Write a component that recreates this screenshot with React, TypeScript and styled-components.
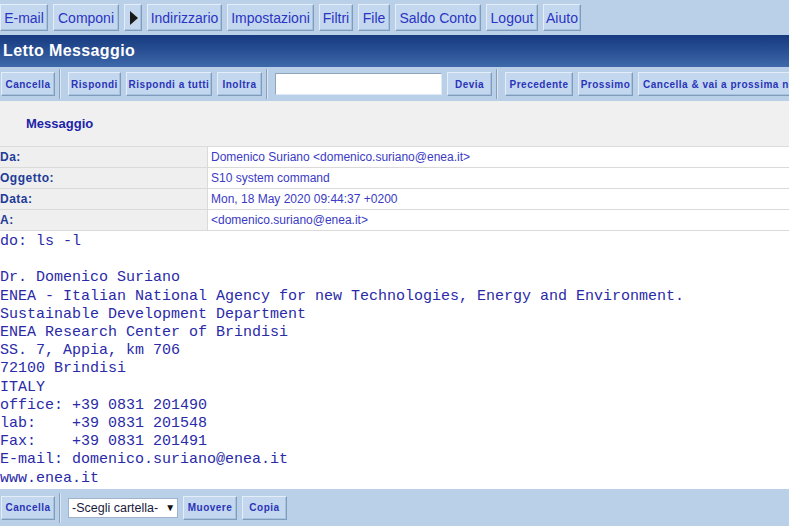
import { FunctionComponent, Fragment } from "react";
import styled, { createGlobalStyle } from "styled-components";

const GlobalStyle = createGlobalStyle`
  html, body {
    margin: 0;
    padding: 0;
    background: #ffffff;
    font-family: "Liberation Sans", Arial, sans-serif;
  }
`;

const Page = styled.div`
  width: 789px;
  height: 526px;
  overflow: hidden;
  display: flex;
  flex-direction: column;
`;

const NavBar = styled.div`
  height: 35px;
  box-sizing: border-box;
  padding: 4px 0 0 0;
  background: #b9d0e8;
  display: flex;
  align-items: flex-start;
  gap: 5px;
`;

const NavButton = styled.div<{ $w: number }>`
  width: ${(p) => p.$w}px;
  height: 27px;
  box-sizing: border-box;
  background: #c3d8ee;
  border: 1px solid;
  border-color: #e4eefa #7f9cbd #7f9cbd #e4eefa;
  box-shadow: inset -1px -1px 0 #a8c1dc;
  display: flex;
  align-items: center;
  justify-content: center;
  font-size: 14px;
  color: #2b34c4;
  white-space: nowrap;
  flex-shrink: 0;
`;

const Arrow = styled.span`
  width: 0;
  height: 0;
  border-top: 7px solid transparent;
  border-bottom: 7px solid transparent;
  border-left: 8px solid #1a1a1a;
  margin-left: 2px;
`;

const TitleBar = styled.div`
  height: 32px;
  background: linear-gradient(#163a7f, #2b5296 55%, #3e6aaa);
  color: #ffffff;
  font-weight: bold;
  font-size: 16px;
  letter-spacing: 0.4px;
  display: flex;
  align-items: center;
  padding-left: 3px;
`;

const ToolBar = styled.div<{ $h: number }>`
  height: ${(p) => p.$h}px;
  flex-shrink: 0;
  box-sizing: border-box;
  background: #b9d0e8;
  display: flex;
  align-items: center;
  gap: 5px;
  padding-left: 1px;
  overflow: hidden;
  white-space: nowrap;
`;

const ActionButton = styled.div<{ $w: number }>`
  width: ${(p) => p.$w}px;
  height: 24px;
  box-sizing: border-box;
  flex-shrink: 0;
  background: #c3d8ee;
  border: 1px solid;
  border-color: #e4eefa #7f9cbd #7f9cbd #e4eefa;
  box-shadow: inset -1px -1px 0 #a8c1dc;
  display: flex;
  align-items: center;
  justify-content: center;
  font-size: 10px;
  font-weight: bold;
  letter-spacing: 0.5px;
  color: #2b34b8;
  overflow: hidden;
`;

// the last toolbar button runs past the window edge, as in the original page
const WideButton = styled(ActionButton)`
  justify-content: flex-start;
  padding-left: 4px;
`;

const Separator = styled.div`
  width: 1px;
  height: 30px;
  flex-shrink: 0;
  background: #8d9fb5;
  border-right: 1px solid #dbe7f4;
  margin-left: -1px;
  margin-right: 2px;
`;

const TextInput = styled.div`
  width: 167px;
  height: 22px;
  box-sizing: border-box;
  flex-shrink: 0;
  background: #ffffff;
  border: 1px solid;
  border-color: #8fa5be #dfe9f4 #dfe9f4 #8fa5be;
`;

const FolderSelect = styled.div`
  width: 110px;
  height: 20px;
  box-sizing: border-box;
  flex-shrink: 0;
  background: #ffffff;
  border: 1px solid #9fb4cc;
  display: flex;
  align-items: center;
  padding-left: 3px;
  gap: 7px;
  font-size: 12.5px;
  color: #1a1a40;
`;

const SelectArrow = styled.span`
  font-size: 10px;
  color: #111;
`;

const MessageHeader = styled.div`
  height: 45px;
  background: #f0f0f0;
  display: flex;
  align-items: center;
  padding-left: 26px;
  font-size: 13px;
  font-weight: bold;
  color: #1c24a8;
`;

const HeaderTable = styled.div`
  display: grid;
  grid-template-columns: 208px 1fr;
  border-top: 1px solid #dcdcdc;
`;

const LabelCell = styled.div`
  height: 21px;
  box-sizing: border-box;
  background: #efefef;
  border-bottom: 1px solid #dadada;
  border-right: 1px solid #dadada;
  display: flex;
  align-items: center;
  font-size: 12px;
  font-weight: bold;
  letter-spacing: 0.5px;
  color: #1d3b98;
`;

const ValueCell = styled.div`
  height: 21px;
  box-sizing: border-box;
  background: #ffffff;
  border-bottom: 1px solid #dadada;
  display: flex;
  align-items: center;
  padding-left: 3px;
  font-size: 12px;
  color: #3a3ac4;
`;

const Body = styled.pre`
  margin: 0;
  padding-top: 2px;
  flex: 1;
  font-family: "Liberation Mono", "Courier New", monospace;
  font-size: 15px;
  line-height: 18.2px;
  color: #2a2aa8;
`;

const headers: [string, string][] = [
  ["Da:", "Domenico Suriano <domenico.suriano@enea.it>"],
  ["Oggetto:", "S10 system command"],
  ["Data:", "Mon, 18 May 2020 09:44:37 +0200"],
  ["A:", "<domenico.suriano@enea.it>"],
];

const bodyText = `do: ls -l

Dr. Domenico Suriano
ENEA - Italian National Agency for new Technologies, Energy and Environment.
Sustainable Development Department
ENEA Research Center of Brindisi
SS. 7, Appia, km 706
72100 Brindisi
ITALY
office: +39 0831 201490
lab:    +39 0831 201548
Fax:    +39 0831 201491
E-mail: domenico.suriano@enea.it
www.enea.it`;

const App: FunctionComponent = () => {
  return (
    <Page>
      <GlobalStyle />
      <NavBar>
        <NavButton $w={48}>E-mail</NavButton>
        <NavButton $w={66}>Componi</NavButton>
        <NavButton $w={18}>
          <Arrow />
        </NavButton>
        <NavButton $w={75}>Indirizzario</NavButton>
        <NavButton $w={87}>Impostazioni</NavButton>
        <NavButton $w={34}>Filtri</NavButton>
        <NavButton $w={32}>File</NavButton>
        <NavButton $w={86}>Saldo Conto</NavButton>
        <NavButton $w={52}>Logout</NavButton>
        <NavButton $w={38}>Aiuto</NavButton>
      </NavBar>
      <TitleBar>Letto Messaggio</TitleBar>
      <ToolBar $h={34}>
        <ActionButton $w={54}>Cancella</ActionButton>
        <Separator />
        <ActionButton $w={53}>Rispondi</ActionButton>
        <ActionButton $w={86}>Rispondi a tutti</ActionButton>
        <ActionButton $w={45}>Inoltra</ActionButton>
        <Separator />
        <TextInput />
        <ActionButton $w={45}>Devia</ActionButton>
        <Separator />
        <ActionButton $w={68}>Precedente</ActionButton>
        <ActionButton $w={55}>Prossimo</ActionButton>
        <WideButton $w={170}>Cancella &amp; vai a prossima notizia</WideButton>
      </ToolBar>
      <MessageHeader>Messaggio</MessageHeader>
      <HeaderTable>
        {headers.map(([label, value]) => (
          <Fragment key={label}>
            <LabelCell>{label}</LabelCell>
            <ValueCell>{value}</ValueCell>
          </Fragment>
        ))}
      </HeaderTable>
      <Body>{bodyText}</Body>
      <ToolBar $h={37}>
        <ActionButton $w={54}>Cancella</ActionButton>
        <Separator />
        <FolderSelect>
          <span>-Scegli cartella-</span>
          <SelectArrow>▼</SelectArrow>
        </FolderSelect>
        <ActionButton $w={54}>Muovere</ActionButton>
        <ActionButton $w={45}>Copia</ActionButton>
      </ToolBar>
    </Page>
  );
};

export default App;
